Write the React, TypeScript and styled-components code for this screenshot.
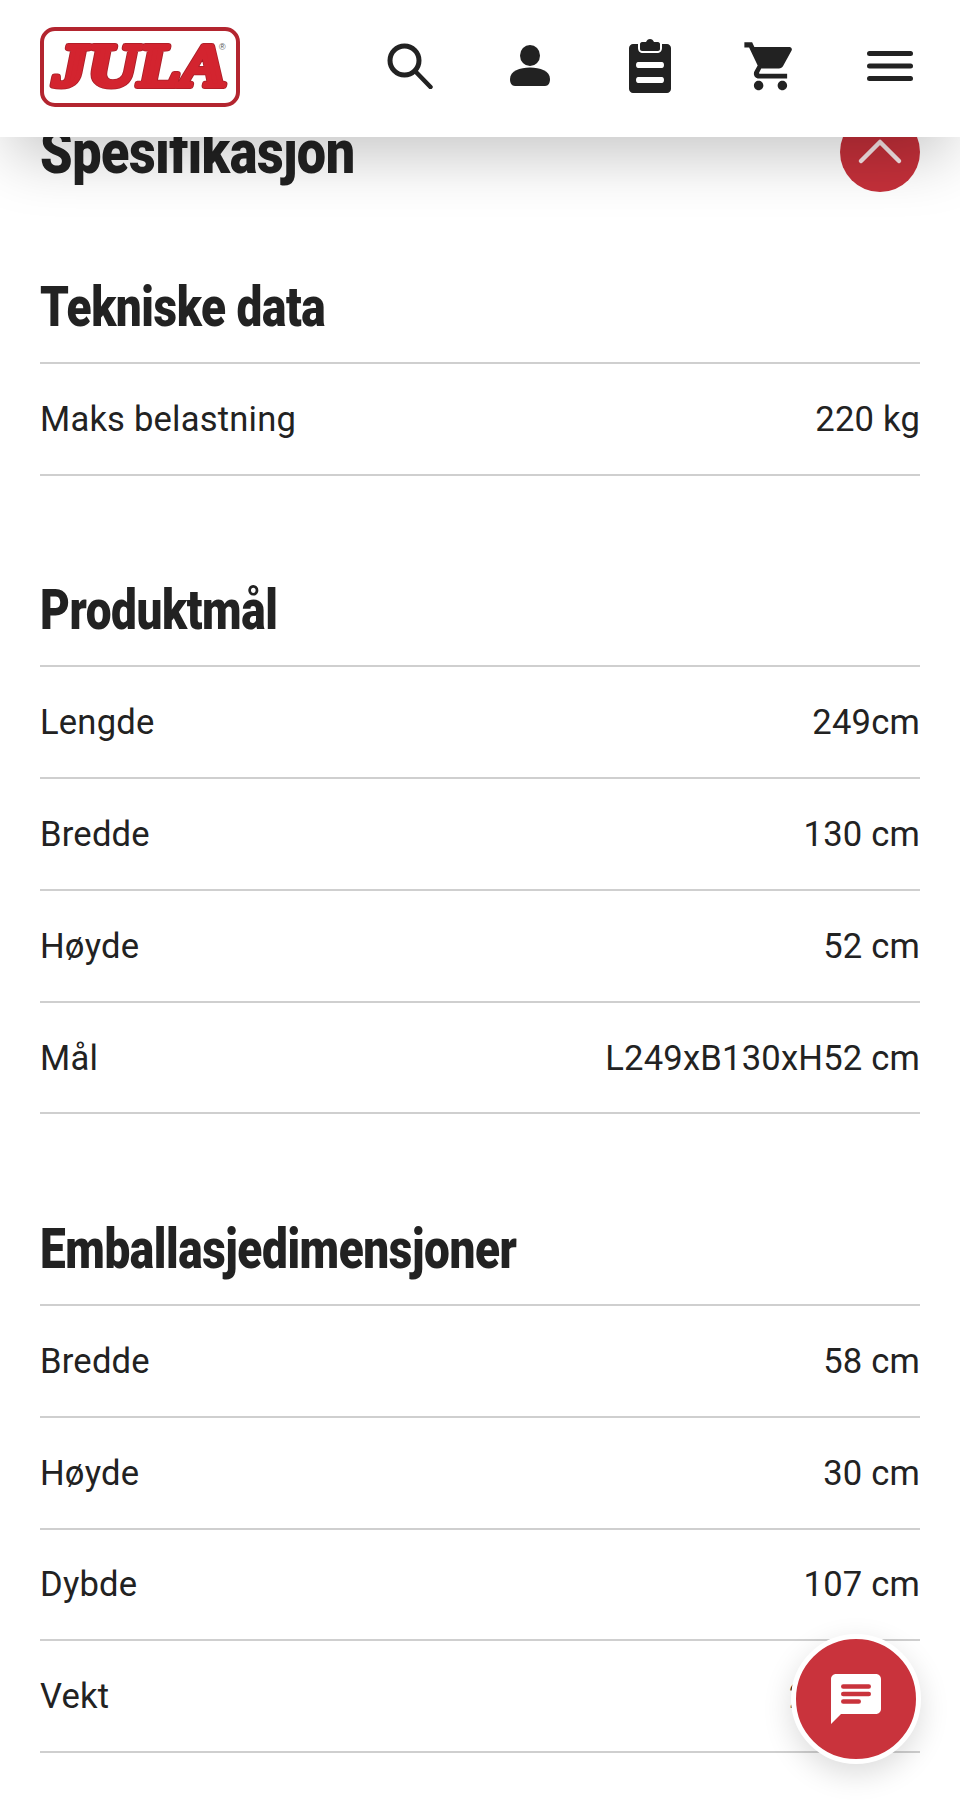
import styled, { createGlobalStyle } from "styled-components";

const sections = [
  {
    title: "Tekniske data",
    rows: [["Maks belastning", "220 kg"]],
  },
  {
    title: "Produktmål",
    rows: [
      ["Lengde", "249cm"],
      ["Bredde", "130 cm"],
      ["Høyde", "52 cm"],
      ["Mål", "L249xB130xH52 cm"],
    ],
  },
  {
    title: "Emballasjedimensjoner",
    rows: [
      ["Bredde", "58 cm"],
      ["Høyde", "30 cm"],
      ["Dybde", "107 cm"],
      ["Vekt", "220,5 kg"],
    ],
  },
];

export default function App() {
  return (
    <Page>
      <GlobalStyle />
      <Header>
        <Logo />
        <Nav>
          <NavItem><SearchIcon /></NavItem>
          <NavItem><PersonIcon /></NavItem>
          <NavItem><ClipboardIcon /></NavItem>
          <NavItem><CartIcon /></NavItem>
          <NavItem><MenuIcon /></NavItem>
        </Nav>
      </Header>
      <Main>
        <TitleRow>
          <Title>Spesifikasjon</Title>
          <CollapseButton>
            <svg width="46" height="28" viewBox="0 0 46 28" fill="none">
              <path d="M4 24 23 5l19 19" stroke="#f8e6e8" strokeWidth="4.500" strokeLinecap="round" strokeLinejoin="round" />
            </svg>
          </CollapseButton>
        </TitleRow>
        {sections.map((section) => (
          <Section key={section.title}>
            <SectionTitle>
              <span>{section.title}</span>
            </SectionTitle>
            {section.rows.map(([label, value]) => (
              <Row key={label}>
                <span>{label}</span>
                <span>{value}</span>
              </Row>
            ))}
          </Section>
        ))}
      </Main>
      <ChatButton>
        <svg width="60" height="60" viewBox="0 0 24 24">
          <path fill="#fff" d="M20 2H4c-1.100 0-1.990.9-1.990 2L2 22l4-4h14c1.100 0 2-.9 2-2V4c0-1.100-.9-2-2-2z" />
          <rect x="6" y="6.100" width="12" height="1.800" rx="0.900" fill="#c9333c" />
          <rect x="6" y="9.100" width="12" height="1.800" rx="0.900" fill="#c9333c" />
          <rect x="6" y="12.100" width="8" height="1.800" rx="0.900" fill="#c9333c" />
        </svg>
      </ChatButton>
    </Page>
  );
}

function Logo() {
  const wordmark = {
    x: 14,
    y: 60,
    textLength: 174,
    lengthAdjust: "spacingAndGlyphs" as const,
    fontFamily: "'Liberation Serif', serif",
    fontStyle: "italic",
    fontWeight: 700,
    fontSize: 62,
    strokeLinejoin: "round" as const,
  };
  return (
    <svg width="202" height="82" viewBox="0 0 202 82">
      <rect x="3" y="3" width="196" height="76" rx="13" fill="#fff" stroke="#b3252f" strokeWidth="4" />
      <text {...wordmark} fill="#a81f28" stroke="#a81f28" strokeWidth="6">JULA</text>
      <text {...wordmark} fill="#d3242f" stroke="#d3242f" strokeWidth="4.500">JULA</text>
      <text x="180" y="24" fontFamily="'Liberation Sans', sans-serif" fontSize="9" fill="#555">
        ®
      </text>
    </svg>
  );
}

function SearchIcon() {
  return (
    <svg width="46" height="46" viewBox="0 0 46 46" fill="none" stroke="#222" strokeLinecap="round">
      <circle cx="17.500" cy="17.500" r="14.500" strokeWidth="5" />
      <path d="M28 28 43.500 44" strokeWidth="4.500" />
    </svg>
  );
}

function PersonIcon() {
  return (
    <svg width="42" height="42" viewBox="0 0 42 42" fill="#222">
      <ellipse cx="21" cy="10.500" rx="10" ry="10.500" />
      <path d="M1 34c0-8 10-11.500 20-11.500S41 26 41 34c0 4-1.500 7-5 7H6c-3.500 0-5-3-5-7z" />
    </svg>
  );
}

function ClipboardIcon() {
  return (
    <svg width="42" height="54" viewBox="0 0 42 54" fill="#222">
      <path d="M4 5h5v4c0 3 2 5 5 5h14c3 0 5-2 5-5V5h5c2 0 4 2 4 4v41c0 2-2 4-4 4H4c-2 0-4-2-4-4V9c0-2 2-4 4-4zm5 18c-1 0-2 1-2 3s1 3 2 3h24c1 0 2-1 2-3s-1-3-2-3H9zm0 15c-1 0-2 1-2 3s1 3 2 3h24c1 0 2-1 2-3s-1-3-2-3H9z" fillRule="evenodd" />
      <path d="M11 5c0-1 1-2 2-2h4c1-2 2-3 4-3s3 1 4 3h4c1 0 2 1 2 2v5c0 1-1 2-2 2H13c-1 0-2-1-2-2V5z" />
    </svg>
  );
}

function CartIcon() {
  return (
    <svg width="57" height="57" viewBox="0 0 24 24" fill="#222">
      <path d="M7 18c-1.100 0-1.990.9-1.990 2S5.900 22 7 22s2-.9 2-2-.9-2-2-2zM1 2v2h2l3.600 7.590-1.350 2.450c-.16.28-.25.61-.25.96 0 1.100.9 2 2 2h12v-2H7.420c-.14 0-.25-.11-.25-.25l.03-.12.9-1.830h7.450c.75 0 1.410-.41 1.750-1.030l3.580-6.490c.08-.14.12-.31.12-.48 0-.55-.45-1-1-1H5.210l-.94-2H1zm16 16c-1.100 0-1.990.9-1.990 2s.89 2 1.990 2 2-.9 2-2-.9-2-2-2z" />
    </svg>
  );
}

function MenuIcon() {
  return (
    <svg width="46" height="30" viewBox="0 0 46 30" fill="#222">
      <rect y="0" width="46" height="5" rx="2.500" />
      <rect y="12.500" width="46" height="5" rx="2.500" />
      <rect y="25" width="46" height="5" rx="2.500" />
    </svg>
  );
}

const GlobalStyle = createGlobalStyle`
  html, body {
    margin: 0;
    padding: 0;
    background: #fff;
  }
`;

const Page = styled.div`
  position: relative;
  width: 960px;
  height: 1803px;
  overflow: hidden;
  background: #fff;
  color: #222;
  font-family: Roboto, "Liberation Sans", sans-serif;
`;

const Header = styled.header`
  position: relative;
  z-index: 2;
  height: 137px;
  box-sizing: border-box;
  padding: 26px 10px 0 39px;
  display: flex;
  justify-content: space-between;
  align-items: flex-start;
  background: #fff;
  box-shadow: 0 30px 60px -10px rgba(0, 0, 0, 0.22);
`;

const Nav = styled.nav`
  display: flex;
  align-items: center;
  height: 66px;
  margin-top: 7px;
`;

const NavItem = styled.div`
  width: 120px;
  display: flex;
  align-items: center;
  justify-content: center;
`;

const Main = styled.main`
  margin-top: -25px;
  padding: 0 40px;
`;

const TitleRow = styled.div`
  height: 80px;
  display: flex;
  justify-content: space-between;
  align-items: center;
`;

const Title = styled.h2`
  margin: 0;
  font-weight: 900;
  font-size: 62px;
  line-height: 1;
  display: inline-block;
  transform-origin: left center;
  white-space: nowrap;
  transform: scaleX(0.84);
  letter-spacing: -0.5px;
`;

const CollapseButton = styled.div`
  width: 80px;
  height: 80px;
  border-radius: 50%;
  background: #c5303a;
  display: flex;
  align-items: center;
  justify-content: center;
  padding-bottom: 2px;
  box-sizing: border-box;
`;

const Section = styled.section`
  margin-top: 91.5px;

  &:first-of-type {
    margin-top: 72px;
  }
`;

const SectionTitle = styled.h3`
  margin: 0;
  height: 100px;
  box-sizing: border-box;
  border-bottom: 2px solid #cfcfcf;
  padding-top: 16px;

  span {
    font-weight: 900;
    font-size: 55px;
    line-height: 1;
    display: inline-block;
    transform-origin: left center;
    white-space: nowrap;
    transform: scaleX(0.835);
    letter-spacing: -0.5px;
  }
`;

const Row = styled.div`
  height: 111.8px;
  box-sizing: border-box;
  border-bottom: 2px solid #cfcfcf;
  display: flex;
  justify-content: space-between;
  align-items: center;
  font-size: 34.6px;
  letter-spacing: 0.2px;
`;

const ChatButton = styled.div`
  position: absolute;
  left: 791px;
  top: 1634px;
  width: 130px;
  height: 130px;
  box-sizing: border-box;
  border: 5px solid #fff;
  border-radius: 50%;
  background: #c9333c;
  display: flex;
  align-items: center;
  justify-content: center;
  box-shadow: 0 10px 30px rgba(0, 0, 0, 0.14);
`;
